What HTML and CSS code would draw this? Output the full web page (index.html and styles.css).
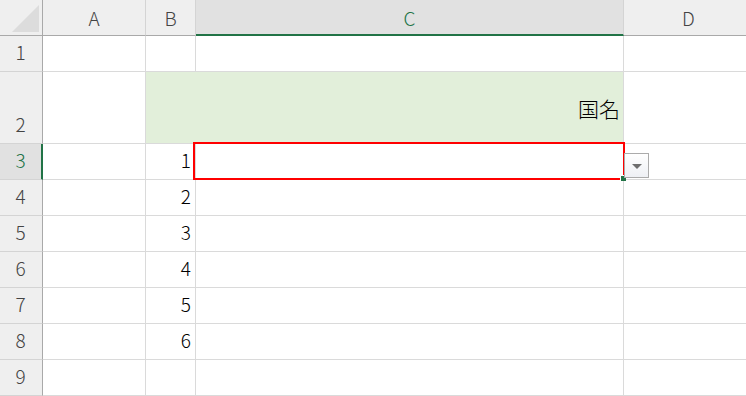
FILE: index.html
```html
<!DOCTYPE html>
<html lang="ja">
<head>
<meta charset="utf-8">
<link rel="stylesheet" href="styles.css">
</head>
<body>
<div class="sheet">
  <div class="grid">
    <div class="corner"><span class="tri"></span></div>
    <div class="ch">A</div>
    <div class="ch">B</div>
    <div class="ch ch-sel">C</div>
    <div class="ch">D</div>

    <div class="rh">1</div>
    <div class="c"></div><div class="c"></div><div class="c"></div><div class="c"></div>

    <div class="rh r2">2</div>
    <div class="c"></div>
    <div class="c fill">国名</div>
    <div class="c"></div>

    <div class="rh rh-sel">3</div>
    <div class="c"></div><div class="c num">1</div><div class="c"></div><div class="c"></div>

    <div class="rh">4</div>
    <div class="c"></div><div class="c num">2</div><div class="c"></div><div class="c"></div>

    <div class="rh">5</div>
    <div class="c"></div><div class="c num">3</div><div class="c"></div><div class="c"></div>

    <div class="rh">6</div>
    <div class="c"></div><div class="c num">4</div><div class="c"></div><div class="c"></div>

    <div class="rh">7</div>
    <div class="c"></div><div class="c num">5</div><div class="c"></div><div class="c"></div>

    <div class="rh">8</div>
    <div class="c"></div><div class="c num">6</div><div class="c"></div><div class="c"></div>

    <div class="rh">9</div>
    <div class="c"></div><div class="c"></div><div class="c"></div><div class="c"></div>
  </div>
  <div class="selection"><span class="handle"></span></div>
  <div class="dropdown"><span class="arrow"></span></div>
</div>
</body>
</html>
```

FILE: styles.css
```css
html, body {
  margin: 0;
  padding: 0;
  background: #ffffff;
  overflow: hidden;
}
.sheet {
  position: relative;
  width: 746px;
  height: 396px;
  font-family: "Noto Sans CJK JP", "Noto Sans", sans-serif;
  font-size: 19px;
  font-weight: 300;
  color: #000;
}
.grid {
  display: grid;
  grid-template-columns: 43px 103px 50px 428px 130px;
  grid-template-rows: 36px 36px 72px repeat(7, 36px);
}
.grid > div {
  box-sizing: border-box;
  border-right: 1px solid #dadada;
  border-bottom: 1px solid #dadada;
}
.corner {
  background: #efefef;
  position: relative;
  border-right: 1px solid #a9a9a9 !important;
  border-bottom: 1px solid #a9a9a9 !important;
}
.tri {
  position: absolute;
  right: 3px;
  bottom: 3px;
  width: 0;
  height: 0;
  border-left: 27px solid transparent;
  border-bottom: 27px solid #dcdcdc;
}
.ch {
  background: #efefef;
  color: #444;
  display: flex;
  align-items: center;
  justify-content: center;
  border-bottom: 1px solid #a9a9a9 !important;
  border-right: 1px solid #d4d4d4 !important;
  padding-bottom: 1px;
}
.ch-sel {
  background: #e1e1e1;
  color: #217346;
  border-bottom: 2px solid #217346 !important;
  padding-top: 1px;
}
.rh {
  background: #efefef;
  color: #444;
  display: flex;
  align-items: flex-end;
  justify-content: center;
  line-height: 36px;
  padding-bottom: 1px;
  padding-right: 1px;
  border-right: 1px solid #a9a9a9 !important;
  border-bottom: 1px solid #d4d4d4 !important;
}
.rh-sel {
  background: #e1e1e1;
  color: #217346;
  border-right: 2px solid #217346 !important;
  padding-right: 0;
}
.c {
  background: #fff;
}
.fill {
  grid-column: span 2;
  background: #e2efda;
  display: flex;
  align-items: center;
  justify-content: flex-end;
  padding-right: 3px;
  padding-top: 1px;
  font-size: 21px;
}
.num {
  display: flex;
  align-items: flex-end;
  justify-content: flex-end;
  line-height: 36px;
  padding-right: 4px;
  padding-bottom: 1px;
}
.selection {
  position: absolute;
  left: 193px;
  top: 142px;
  width: 432px;
  height: 38px;
  box-sizing: border-box;
  border: 2px solid #ff0000;
}
.handle {
  position: absolute;
  right: -3px;
  bottom: -3px;
  width: 5px;
  height: 5px;
  background: #217346;
  box-shadow: -1px -1px 0 0 #ffffff;
}
.dropdown {
  position: absolute;
  left: 624px;
  top: 153px;
  width: 25px;
  height: 25px;
  box-sizing: border-box;
  border: 1px solid #ababab;
  background: linear-gradient(#ffffff, #eef0f4);
}
.arrow {
  position: absolute;
  left: 7px;
  top: 10px;
  width: 0;
  height: 0;
  border-left: 5px solid transparent;
  border-right: 5px solid transparent;
  border-top: 5px solid #6e6e6e;
}
```
